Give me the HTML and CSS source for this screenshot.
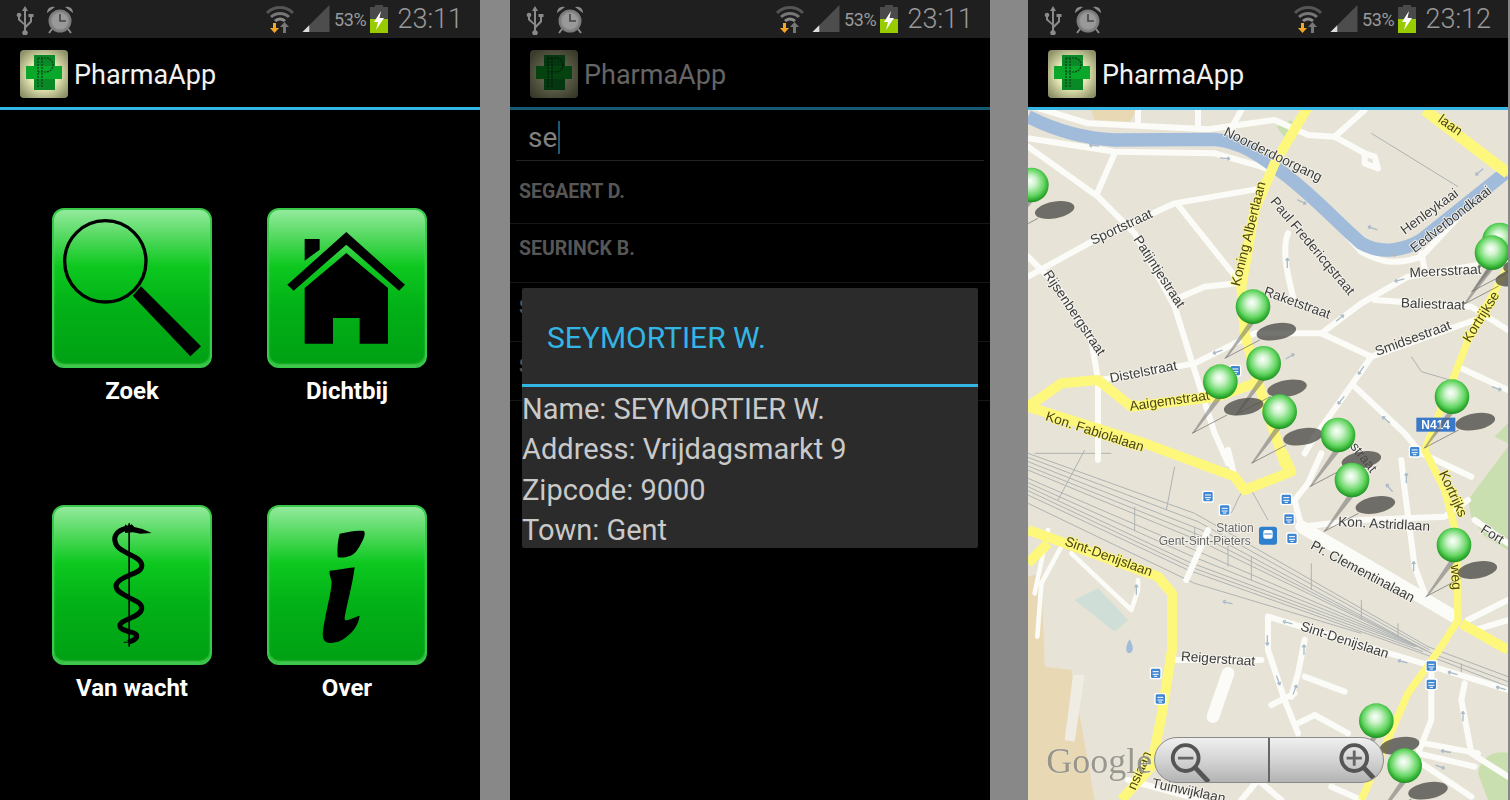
FILE: index.html
```html
<!DOCTYPE html>
<html lang="nl">
<head>
  <meta charset="UTF-8">
  <meta name="viewport" content="width=device-width, initial-scale=1.0">
  <title>PharmaApp</title>
  <link rel="stylesheet" href="styles.css">
</head>
<body>

<!-- shared icons -->
<svg class="sprite" aria-hidden="true">
  <defs>
    <radialGradient id="logo-bg" cx="50%" cy="50%" r="62%">
      <stop offset="0" stop-color="#fcfce2"/><stop offset=".5" stop-color="#e4e6b4"/><stop offset="1" stop-color="#8f9268"/>
    </radialGradient>
    <radialGradient id="ball" cx="50%" cy="45%" r="55%" fx="46%" fy="38%">
      <stop offset="0" stop-color="#fdfffd"/><stop offset=".3" stop-color="#cdf3cb"/><stop offset=".7" stop-color="#62d560"/><stop offset=".92" stop-color="#2aa62c"/><stop offset="1" stop-color="#1d8a22"/>
    </radialGradient>
  </defs>
  <symbol id="i-usb" viewBox="0 0 20 30">
    <path d="M10 1l3 5h-2v14l4-4v-4h-1.500V9h5v3H17v5l-6 6v2.200a2.800 2.800 0 1 1-2 0V20L3 15v-3a2.300 2.300 0 1 1 2 0v2l4 4V6H7z" fill="#8a8a8a"/>
  </symbol>
  <symbol id="i-alarm" viewBox="0 0 28 30">
    <circle cx="14" cy="16" r="10.500" fill="#8a8a8a" stroke="#7a7a7a" stroke-width="2"/>
    <circle cx="14" cy="16" r="8" fill="#999"/>
    <path d="M14 9v7h6" fill="none" stroke="#444" stroke-width="1.600"/>
    <path d="M1 8a6 6 0 0 1 8-6zM27 8a6 6 0 0 0-8-6z" fill="#8a8a8a"/>
    <path d="M6 24l-3 4M22 24l3 4" stroke="#8a8a8a" stroke-width="2"/>
  </symbol>
  <symbol id="i-wifi" viewBox="0 0 28 30">
    <path d="M1 8a18 18 0 0 1 26 0" fill="none" stroke="#555" stroke-width="3"/>
    <path d="M5 12a13 13 0 0 1 18 0" fill="none" stroke="#777" stroke-width="3"/>
    <path d="M9 16a7 7 0 0 1 10 0" fill="none" stroke="#8a8a8a" stroke-width="3"/>
    <path d="M17 28v-6h-3l4.500-5 4.500 5h-3v6z" fill="#777"/>
    <path d="M7 18h3v5h3l-4.500 5L4 23h3z" fill="#f5a623"/>
  </symbol>
  <symbol id="i-signal" viewBox="0 0 28 28">
    <path d="M28 0v28H0z" fill="#4d4d4d"/>
    <path d="M7 21v7H0z" fill="#ddd"/>
  </symbol>
  <symbol id="i-batt" viewBox="0 0 18 28">
    <path d="M5 0h8v2h5v26H0V2h5z" fill="#4a4a4a"/>
    <path d="M0 14h18v14H0z" fill="#99cc00"/>
    <path d="M11 6L4 17h4l-2 8 8-12H9.500z" fill="#fff"/>
  </symbol>
  <symbol id="i-logo" viewBox="0 0 48 48">
    <rect width="48" height="48" rx="4" fill="url(#logo-bg)"/>
    <path d="M14 5h21v11h7v13h-7v11H14V29H6V16h8z" fill="#0aa82a"/>
    <path d="M14 5h21v11H14zM14 29h21v11H14z" fill="#0a8a26"/>
    <path d="M18 8h8a7 7 0 0 1 0 14h-8M22 8v30M18 8v30" fill="none" stroke="#0a3d18" stroke-width="1.200" stroke-dasharray="2 1"/>
  </symbol>
</svg>

<div class="screens">

  <!-- menu -->
  <section class="phone">
    <div class="status">
      <svg class="st-usb"><use href="#i-usb"/></svg>
      <svg class="st-alarm"><use href="#i-alarm"/></svg>
      <span class="status-fill"></span>
      <svg class="st-wifi"><use href="#i-wifi"/></svg>
      <svg class="st-signal"><use href="#i-signal"/></svg>
      <span class="st-pct">53%</span>
      <svg class="st-batt"><use href="#i-batt"/></svg>
      <span class="st-time">23:11</span>
    </div>
    <div class="actionbar">
      <svg class="logo"><use href="#i-logo"/></svg>
      <span class="app-title">PharmaApp</span>
    </div>

    <div class="menu">
      <a class="tile">
        <span class="tile-btn">
          <svg viewBox="6 6 468 468">
            <circle cx="160" cy="160" r="122" fill="none" stroke="#000" stroke-width="10"/>
            <path d="M242 263L267 235 447 415 415 445z"/>
          </svg>
        </span>
        <span class="tile-label">Zoek</span>
      </a>
      <a class="tile">
        <span class="tile-btn">
          <svg viewBox="6 6 468 468">
            <path d="M113 93h45v32l-45 33z"/>
            <path d="M61 230L238 72 414 230 396 248 238 110 80 248z"/>
            <path d="M113 240L238 135 363 240V407H278V330H198V407H113z"/>
          </svg>
        </span>
        <span class="tile-label">Dichtbij</span>
      </a>
      <a class="tile">
        <span class="tile-btn">
          <svg viewBox="6 6 468 468">
            <path d="M229 55h5v370h-5zM215 410h30v3h-30z"/>
            <path d="M232 68C200 72 185 90 189 108 192 130 215 138 232 148 258 160 272 170 269 185 266 200 245 205 229 212 205 222 190 232 192 245 194 262 215 268 232 278 258 290 272 298 269 312 266 328 245 335 229 342 212 350 202 355 204 364 206 374 220 376 232 380 248 384 256 388 254 396 250 406 238 408 229 412" fill="none" stroke="#000" stroke-width="15"/>
            <path d="M219 58l8 6 12-6 8 8 24 6 28 12-34 2-22-4-24 2z"/>
          </svg>
        </span>
        <span class="tile-label">Van wacht</span>
      </a>
      <a class="tile">
        <span class="tile-btn">
          <svg viewBox="6 6 468 468">
            <path d="M218 86c25-5 50-11 73-8 6 8-2 26-10 40-8 16-18 30-30 34-16 5-32 8-39 4-2-24 0-48 6-70z"/>
            <path d="M188 197c25-2 52-8 75-10-6 50-22 105-30 150-2 12 6 10 16 6 12-4 22-10 29-10-2 14-10 34-20 44-14 16-32 30-52 35-18 4-34 2-38-14-2-14 2-36 6-56 6-34 18-76 20-110-1-12-8-20-6-35z"/>
          </svg>
        </span>
        <span class="tile-label">Over</span>
      </a>
    </div>
  </section>

  <!-- search + detail dialog -->
  <section class="phone phone-dim">
    <div class="status">
      <svg class="st-usb"><use href="#i-usb"/></svg>
      <svg class="st-alarm"><use href="#i-alarm"/></svg>
      <span class="status-fill"></span>
      <svg class="st-wifi"><use href="#i-wifi"/></svg>
      <svg class="st-signal"><use href="#i-signal"/></svg>
      <span class="st-pct">53%</span>
      <svg class="st-batt"><use href="#i-batt"/></svg>
      <span class="st-time">23:11</span>
    </div>
    <div class="actionbar">
      <svg class="logo"><use href="#i-logo"/></svg>
      <span class="app-title">PharmaApp</span>
    </div>

    <div class="search">
      <span class="search-text">se</span><span class="caret"></span>
    </div>
    <ul class="results">
      <li>SEGAERT D.</li>
      <li>SEURINCK B.</li>
      <li>S</li>
      <li>S</li>
    </ul>

    <div class="dialog">
      <div class="dialog-title">SEYMORTIER W.</div>
      <div class="dialog-body">
        <div>Name: SEYMORTIER W.</div>
        <div>Address: Vrijdagsmarkt 9</div>
        <div>Zipcode: 9000</div>
        <div>Town: Gent</div>
      </div>
    </div>
  </section>

  <!-- map -->
  <section class="phone phone-map">
    <div class="status">
      <svg class="st-usb"><use href="#i-usb"/></svg>
      <svg class="st-alarm"><use href="#i-alarm"/></svg>
      <span class="status-fill"></span>
      <svg class="st-wifi"><use href="#i-wifi"/></svg>
      <svg class="st-signal"><use href="#i-signal"/></svg>
      <span class="st-pct">53%</span>
      <svg class="st-batt"><use href="#i-batt"/></svg>
      <span class="st-time">23:12</span>
    </div>
    <div class="actionbar">
      <svg class="logo"><use href="#i-logo"/></svg>
      <span class="app-title">PharmaApp</span>
    </div>

    <div class="map">
      <svg class="map-svg" viewBox="0 30 1440 2070">
        <defs>
          <g id="tr">
            <rect x="-18" y="-18" width="36" height="36" rx="6" fill="#fff"/>
            <rect x="-14" y="-14" width="28" height="28" rx="4" fill="#3f87d0"/>
            <path d="M-9-5h18M-9 3h18M-5 9h10" stroke="#fff" stroke-width="3"/>
          </g>
          <path id="ar" d="M-16 0H14M-16 0l8-5M-16 0l8 5" fill="none" stroke="#a9bac8" stroke-width="4"/>
          <g id="pin-sh">
            <path d="M-12 45L-85 155-78 153 4 50z" fill="#666" opacity=".5"/>
            <path d="M-85 155L20 100" stroke="#666" stroke-width="2"/>
            <ellipse cx="70" cy="75" rx="60" ry="25" transform="rotate(-10 70 75)" fill="#4d4b48" opacity=".78"/>
          </g>
          <circle id="pin-ball" r="52" fill="url(#ball)"/>
        </defs>

        <rect x="0" y="30" width="1440" height="2070" fill="#e8e3d7"/>

        <!-- land use -->
        <path class="tan" d="M190 30H325L305 65 200 60zM0 1430L40 1420 50 1700 130 1710 170 1930 200 2100H0z"/>
        <path class="pale" d="M135 1725H170L140 1925 110 1920z"/>
        <path class="park" d="M745 80L790 60 800 85 770 112zM1320 1200L1440 1040V1350L1370 1310 1330 1250zM1350 2020a70 70 0 0 1 90-60V2100H1380zM1400 1010L1440 970V1030z"/>
        <path class="pond" d="M140 1500L210 1465 300 1560 260 1595z"/>
        <path class="lake" d="M305 1618c12 20 14 40-3 42-12-4-8-26 3-42z"/>

        <!-- rails -->
        <g class="rail">
          <path d="M0 1060L500 1240 1200 1640 1440 1730"/>
          <path d="M0 1085L520 1290 1210 1660 1440 1745"/>
          <path d="M0 1110L520 1325 1190 1650"/>
          <path d="M0 1135L500 1350 1170 1640"/>
          <path d="M0 1160L480 1385 1160 1640"/>
          <path d="M0 1185L480 1410 1210 1670 1440 1760"/>
          <path d="M0 1210L500 1450 1000 1600"/>
          <path d="M0 1072L510 1265 1205 1650"/>
          <path d="M0 1098L520 1308 1200 1655"/>
          <path d="M0 1148L490 1368 1165 1640"/>
          <path d="M0 1172L480 1398 1185 1655"/>
          <path d="M20 1060H250M170 1050L90 1200M440 1100L415 1230"/>
          <path d="M320 1220V1290M500 1280V1340M600 1330V1400M670 1370V1440M850 1390V1470M1000 1500V1560M1110 1570V1610M1300 1690V1725"/>
          <path d="M1030 100L1290 260M1150 770L1180 815 1300 850M670 1170L720 1260 M640 1180C620 1210 620 1230 600 1250"/>
        </g>

        <!-- small streets -->
        <g class="road">
          <path d="M0 15L180 70 540 88 740 60 840 105 920 110 1010 30"/>
          <path d="M920 110L1010 160 1010 190 1050 205 1040 170 1010 160"/>
          <path d="M0 115L260 155 560 160 700 200 800 240C880 310 940 390 1000 455 1060 490 1110 495 1180 470L1410 225"/>
          <path d="M330 30V70M510 30V85M640 30L610 85"/>
          <path d="M260 160L205 285"/>
          <path d="M0 140L210 290 320 400 440 620 490 780 560 1000 600 1090"/>
          <path d="M0 530L200 420 440 310 700 265"/>
          <path d="M450 315L630 540"/>
          <path d="M460 590L530 560 630 550"/>
          <path d="M780 400C760 450 780 530 795 590"/>
          <path d="M0 470L90 560 190 720 210 840V1080"/>
          <path d="M220 840L500 790 680 700 880 700 1000 610 1140 530 1440 480"/>
          <path d="M1040 600L1330 620 1440 690"/>
          <path d="M880 700L1030 770 1340 660"/>
          <path d="M1180 460L1190 510"/>
          <path d="M1030 770L960 870 860 1010 830 1060"/>
          <path d="M980 860L1130 1000 1180 1060 1330 1130"/>
          <path d="M1290 800L1440 870"/>
          <path d="M880 1060L840 1150 800 1200 820 1280 1000 1260 1250 1250 1320 1200"/>
          <path d="M1120 1080L1130 1170 1160 1400 1190 1480"/>
          <path d="M1340 1260L1440 1330"/>
          <path class="road-wide" d="M820 1280L1280 1550"/>
          <path d="M600 1050L620 1130"/>
          <path d="M540 1290L475 1440"/>
          <path d="M720 1550L1200 1695 1440 1770"/>
          <path d="M720 1550V1650L770 1800 810 1900"/>
          <path d="M830 1620L810 1720 790 1790"/>
          <path d="M830 1730L950 1775M730 1815L800 1780M810 1870L860 1845 960 1900"/>
          <path class="road-wide" d="M600 1720L555 1850"/>
          <path d="M1310 1750L1300 1800 1330 1960 1440 2030"/>
          <path d="M1210 1720V1860L1170 1960 1340 2000"/>
          <path d="M1190 1930L1350 1960"/>
          <path d="M1180 1990L1330 2090"/>
          <path d="M300 2040L520 2100M640 2100L690 2040 760 2100M910 2060L1000 2100"/>
          <path class="road-thin" d="M60 1290L20 1480M100 1340L40 1450 28 1610"/>
          <path class="road-thin" d="M130 1360L310 1530 330 1470V1440"/>
          <path d="M440 1680H700"/>
          <path d="M1320 1560L1440 1500M1340 1590L1440 1560"/>
        </g>

        <!-- water -->
        <path class="water" d="M0 50C70 85 150 115 260 120L560 118C640 125 700 170 760 215 860 290 930 370 1000 430 1060 465 1130 450 1180 420L1430 220"/>

        <!-- main roads -->
        <g class="major">
          <path d="M840 20L740 190 680 330 640 560 650 700 700 880 770 1090 785 1110"/>
          <path d="M0 920L350 1030 620 1130 650 1170 790 1115 760 1050"/>
          <path d="M0 920L100 850 210 840 310 920 570 890 680 850"/>
          <path class="major-wide" d="M1190 30L1440 220"/>
          <path class="major-thin" d="M1440 500L1320 720 1270 850 1190 1050 1250 1170 1285 1300 1290 1560 1240 1640 1140 1780 1000 2100"/>
          <path d="M1300 1570L1440 1650"/>
          <path d="M0 1290L390 1430 432 1480 432 1650 400 1850 370 2000 280 2100"/>
          <path d="M0 1390L60 1330"/>
        </g>

        <!-- one-way arrows -->
        <g>
          <use href="#ar" transform="translate(200 137) rotate(5)"/>
          <use href="#ar" transform="translate(590 175) rotate(185)"/>
          <use href="#ar" transform="translate(820 305) rotate(205)"/>
          <use href="#ar" transform="translate(1035 385) rotate(20)"/>
          <use href="#ar" transform="translate(1090 465) rotate(175)"/>
          <use href="#ar" transform="translate(1355 215) rotate(-40)"/>
          <use href="#ar" transform="translate(778 490) rotate(90)"/>
          <use href="#ar" transform="translate(1115 540) rotate(-15)"/>
          <use href="#ar" transform="translate(570 755) rotate(-20)"/>
          <use href="#ar" transform="translate(785 770) rotate(150)"/>
          <use href="#ar" transform="translate(935 655) rotate(140)"/>
          <use href="#ar" transform="translate(1000 810) rotate(-55)"/>
          <use href="#ar" transform="translate(940 900) rotate(-50)"/>
          <use href="#ar" transform="translate(1075 960) rotate(40)"/>
          <use href="#ar" transform="translate(1405 865) rotate(200)"/>
          <use href="#ar" transform="translate(1135 1135) rotate(90)"/>
          <use href="#ar" transform="translate(1085 1165) rotate(50)"/>
          <use href="#ar" transform="translate(1157 1400) rotate(90)"/>
          <use href="#ar" transform="translate(325 1470) rotate(90)"/>
          <use href="#ar" transform="translate(718 1620) rotate(-90)"/>
          <use href="#ar" transform="translate(828 1650) rotate(90)"/>
          <use href="#ar" transform="translate(750 1740) rotate(-110)"/>
          <use href="#ar" transform="translate(800 1770) rotate(110)"/>
          <use href="#ar" transform="translate(1255 1955) rotate(10)"/>
          <use href="#ar" transform="translate(1235 2000) rotate(200)"/>
          <use href="#ar" transform="translate(1305 1850) rotate(90)"/>
          <use href="#ar" transform="translate(1125 1685) rotate(15)"/>
          <use href="#ar" transform="translate(1275 1720) rotate(15)"/>
          <use href="#ar" transform="translate(1420 1765) rotate(15)"/>
          <use href="#ar" transform="translate(780 1568) rotate(15)"/>
          <use href="#ar" transform="translate(600 1508) rotate(15)"/>
        </g>

        <!-- street names -->
        <g class="lbl">
          <text transform="translate(585 105) rotate(26)">Noorderdoorgang</text>
          <text transform="translate(195 435) rotate(-25)">Sportstraat</text>
          <text transform="translate(725 305) rotate(50)">Paul Fredericqstraat</text>
          <text transform="translate(315 418) rotate(57)">Patijntjestraat</text>
          <text transform="translate(45 522) rotate(56)">Rijsenbergstraat</text>
          <text transform="translate(705 585) rotate(20)">Raketstraat</text>
          <text transform="translate(1130 405) rotate(-36)">Henleykaai</text>
          <text transform="translate(1160 460) rotate(-38)">Eedverbondkaai</text>
          <text transform="translate(1145 532) rotate(-3)">Meersstraat</text>
          <text transform="translate(1118 622) rotate(2)">Baliestraat</text>
          <text transform="translate(1047 768) rotate(-20)">Smidsestraat</text>
          <text transform="translate(248 848) rotate(-11)">Distelstraat</text>
          <text transform="translate(930 1278) rotate(3)">Kon. Astridlaan</text>
          <text transform="translate(845 1345) rotate(28)">Pr. Clementinalaan</text>
          <text transform="translate(815 1590) rotate(18)">Sint-Denijslaan</text>
          <text transform="translate(458 1682) rotate(4)">Reigerstraat</text>
          <text transform="translate(370 2062) rotate(12)">Tuinwijklaan</text>
          <text transform="translate(1355 1295) rotate(32)">Fort</text>
          <text transform="translate(965 1040) rotate(52)">straat</text>
          <text class="lbl-grey" x="565" y="1296">Station</text>
          <text class="lbl-grey" x="392" y="1336">Gent-Sint-Pieters</text>
        </g>
        <g class="lbl lbl-y">
          <text transform="translate(635 560) rotate(-76)">Koning Albertlaan</text>
          <text transform="translate(1325 730) rotate(-58)">Kortrijkse</text>
          <text transform="translate(307 932) rotate(-8)">Aaigemstraat</text>
          <text transform="translate(50 960) rotate(18)">Kon. Fabiolalaan</text>
          <text transform="translate(1228 64) rotate(35)">laan</text>
          <text transform="translate(1232 1120) rotate(65)">Kortrijks</text>
          <text transform="translate(1268 1395) rotate(86)">weg</text>
          <text transform="translate(108 1335) rotate(20)">Sint-Denijslaan</text>
          <text transform="translate(322 2072) rotate(-66)">nsiaan</text>
        </g>

        <!-- transit stops -->
        <use href="#tr" x="622" y="812"/>
        <use href="#tr" x="1160" y="1055"/>
        <use href="#tr" x="540" y="1190"/>
        <use href="#tr" x="590" y="1230"/>
        <use href="#tr" x="775" y="1198"/>
        <use href="#tr" x="783" y="1257"/>
        <use href="#tr" x="792" y="1315"/>
        <use href="#tr" x="383" y="1720"/>
        <use href="#tr" x="397" y="1797"/>
        <use href="#tr" x="1210" y="1698"/>
        <use href="#tr" x="1210" y="1753"/>
        <rect x="693" y="1280" width="54" height="54" rx="8" fill="#2f7fcf"/>
        <rect x="706" y="1290" width="28" height="26" rx="6" fill="#fff"/>
        <path d="M709 1302h22M708 1324l6-7M732 1324l-6-7" stroke="#2f7fcf" stroke-width="3"/>

        <!-- N414 -->
        <rect x="1165" y="953" width="117" height="42" fill="#3a78c8"/>
        <text class="shield" x="1223" y="987">N414</text>

        <text class="google" x="55" y="2020">Google</text>

        <!-- pharmacy markers -->
        <use href="#pin-sh" x="10" y="255"/>
        <use href="#pin-sh" x="675" y="620"/>
        <use href="#pin-sh" x="707" y="790"/>
        <use href="#pin-sh" x="577" y="845"/>
        <use href="#pin-sh" x="755" y="935"/>
        <use href="#pin-sh" x="930" y="1005"/>
        <use href="#pin-sh" x="972" y="1140"/>
        <use href="#pin-sh" x="1272" y="890"/>
        <use href="#pin-sh" x="1415" y="420"/>
        <use href="#pin-sh" x="1392" y="458"/>
        <use href="#pin-sh" x="1278" y="1335"/>
        <use href="#pin-sh" x="1045" y="1862"/>
        <use href="#pin-sh" x="1130" y="1997"/>
        <use href="#pin-ball" x="10" y="255"/>
        <use href="#pin-ball" x="675" y="620"/>
        <use href="#pin-ball" x="707" y="790"/>
        <use href="#pin-ball" x="577" y="845"/>
        <use href="#pin-ball" x="755" y="935"/>
        <use href="#pin-ball" x="930" y="1005"/>
        <use href="#pin-ball" x="972" y="1140"/>
        <use href="#pin-ball" x="1272" y="890"/>
        <use href="#pin-ball" x="1415" y="420"/>
        <use href="#pin-ball" x="1392" y="458"/>
        <use href="#pin-ball" x="1278" y="1335"/>
        <use href="#pin-ball" x="1045" y="1862"/>
        <use href="#pin-ball" x="1130" y="1997"/>
      </svg>

      <div class="zoom">
        <svg class="zoom-btn" viewBox="0 0 114 46">
          <circle cx="30" cy="21" r="13.500" fill="none" stroke="#555" stroke-width="4"/>
          <path d="M22 21h16" stroke="#666" stroke-width="3"/>
          <path d="M40 31l14 15" stroke="#555" stroke-width="5"/>
        </svg>
        <svg class="zoom-btn" viewBox="0 0 114 46">
          <circle cx="86" cy="21" r="13.500" fill="none" stroke="#555" stroke-width="4"/>
          <path d="M78 21h16M86 13v16" stroke="#666" stroke-width="3"/>
          <path d="M96 31l14 15" stroke="#555" stroke-width="5"/>
        </svg>
      </div>
    </div>
  </section>

</div>
</body>
</html>
```

FILE: styles.css
```css
body {
  margin: 0;
  background: #888888;
  font-family: Roboto, "Liberation Sans", sans-serif;
  overflow: hidden;
}
.sprite {
  position: absolute;
  width: 0;
  height: 0;
}
.screens {
  display: flex;
}
.phone {
  position: relative;
  width: 480px;
  height: 800px;
  background: #000;
  display: flex;
  flex-direction: column;
  overflow: hidden;
  flex: none;
}
.phone-dim {
  margin-left: 30px;
}
.phone-map {
  margin-left: 38px;
}

/* status bar */
.status {
  height: 38px;
  flex: none;
  background: #1f1f1f;
  display: flex;
  align-items: flex-start;
  color: #999;
}
.status svg {
  flex: none;
  margin-top: 5px;
}
.st-usb {
  width: 20px;
  height: 30px;
  margin-left: 15px;
}
.st-alarm {
  width: 28px;
  height: 30px;
  margin-left: 11px;
}
.status-fill {
  flex: 1;
}
.st-wifi {
  width: 28px;
  height: 30px;
}
.st-signal {
  width: 28px;
  height: 27px;
  margin-left: 8px;
}
.st-pct {
  font-size: 18px;
  line-height: 40px;
  margin-left: 4px;
  letter-spacing: -0.3px;
}
.st-batt {
  width: 18px;
  height: 28px;
  margin-left: 4px;
}
.st-time {
  font-size: 27px;
  font-weight: 300;
  line-height: 38px;
  margin-left: 9px;
  margin-right: 17px;
}

/* action bar */
.actionbar {
  height: 69px;
  flex: none;
  display: flex;
  align-items: center;
  padding-left: 20px;
  border-bottom: 3px solid #33b5e5;
}
.logo {
  width: 48px;
  height: 48px;
  margin-top: 3px;
}
.app-title {
  font-size: 27px;
  color: #f2f2f2;
  margin-left: 6px;
  padding-top: 4px;
}

/* menu */
.menu {
  display: grid;
  grid-template-columns: 160px 160px;
  column-gap: 55px;
  row-gap: 0;
  padding: 98px 0 0 52px;
}
.tile {
  display: flex;
  flex-direction: column;
  align-items: center;
  height: 297px;
}
.tile-btn {
  display: block;
  box-sizing: border-box;
  width: 160px;
  height: 160px;
  border: 2px solid #39c94a;
  border-radius: 12px;
  background: linear-gradient(#93ea9c 0, #5fdc6a 14%, #0dc81f 36%, #02b117 62%, #00a013 100%);
  box-shadow: inset 0 -2px 2px rgba(150, 240, 150, .5);
}
.tile-btn svg {
  display: block;
  width: 156px;
  height: 156px;
  fill: #000;
}
.tile-label {
  font-size: 24px;
  font-weight: 700;
  color: #fff;
  margin-top: 9px;
}

/* search screen, dimmed behind the dialog */
.phone-dim .logo {
  opacity: .4;
}
.phone-dim .app-title {
  color: #656565;
}
.phone-dim .actionbar {
  border-bottom-color: #155a70;
}
.search {
  height: 51px;
  margin: 0 6px;
  flex: none;
  display: flex;
  align-items: center;
  padding: 5px 0 0 12px;
  box-sizing: border-box;
  border-bottom: 1px solid #222;
}
.search-text {
  font-size: 28px;
  color: #808080;
}
.caret {
  width: 2px;
  height: 33px;
  margin-left: 1px;
  background: #1d5a78;
}
.results {
  list-style: none;
  margin: 0;
  padding: 0;
}
.results li {
  height: 58px;
  border-bottom: 1px solid #161616;
  padding-left: 9px;
  font-size: 19.500px;
  font-weight: 700;
  line-height: 49px;
  color: #565656;
}
.results li:first-child {
  height: 62px;
  line-height: 61px;
}
.dialog {
  position: absolute;
  left: 12px;
  top: 288px;
  width: 456px;
  height: 260px;
  background: #2b2b2b;
  border-radius: 2px;
}
.dialog-title {
  height: 99px;
  box-sizing: border-box;
  padding: 0 0 0 25px;
  font-size: 30px;
  line-height: 100px;
  color: #33b5e5;
  border-bottom: 3px solid #33b5e5;
}
.dialog-body {
  font-size: 29px;
  line-height: 40.300px;
  color: #c9c9c9;
  padding-top: 2px;
}

/* map */
.map {
  position: relative;
  flex: 1;
  overflow: hidden;
}
.map-svg {
  display: block;
  width: 480px;
  height: 690px;
  filter: blur(.5px);
}
.road path {
  fill: none;
  stroke: #fbfcf8;
  stroke-width: 18;
  stroke-linejoin: round;
  stroke-linecap: round;
}
.road .road-wide {
  stroke-width: 38;
}
.road .road-thin {
  stroke-width: 14;
}
.major path {
  fill: none;
  stroke: #fdf87c;
  stroke-width: 30;
  stroke-linejoin: round;
}
.major .major-wide {
  stroke-width: 34;
}
.major .major-thin {
  stroke-width: 22;
}
.water {
  fill: none;
  stroke: #a0bcda;
  stroke-width: 40;
}
.rail path {
  fill: none;
  stroke: #aeb3b4;
  stroke-width: 3;
}
.tan {
  fill: #e8d8b4;
}
.pale {
  fill: #efece3;
}
.park {
  fill: #c9dfaf;
}
.pond {
  fill: #cfded6;
}
.lake {
  fill: #a0bcda;
}
.lbl {
  font-family: "Liberation Sans", Arial, sans-serif;
  font-size: 41px;
  fill: #3c3c3c;
  stroke: #f6f5ef;
  stroke-width: 5px;
  paint-order: stroke;
}
.lbl-y {
  stroke: #fdf87c;
  fill: #4a4416;
}
.lbl-grey {
  font-size: 36px;
  fill: #666;
}
.shield {
  font-family: "Liberation Sans", Arial, sans-serif;
  font-size: 36px;
  font-weight: 700;
  fill: #fff;
  text-anchor: middle;
}
.google {
  font-family: "Liberation Serif", serif;
  font-size: 108px;
  fill: #8b8b85;
  stroke: #f2f0e8;
  stroke-width: 2px;
  paint-order: stroke;
  opacity: .85;
}
.zoom {
  position: absolute;
  left: 126px;
  bottom: 17px;
  width: 230px;
  height: 46px;
  box-sizing: border-box;
  display: flex;
  justify-content: space-between;
  border-radius: 23px;
  border: 1px solid #8a8a8a;
  background: linear-gradient(#f0f0f0 0, #d4d4d4 50%, #b3b3b3 100%);
  overflow: hidden;
}
.zoom-btn {
  width: 114px;
  height: 44px;
}
.zoom-btn:first-child {
  border-right: 2px solid #666;
}
```
